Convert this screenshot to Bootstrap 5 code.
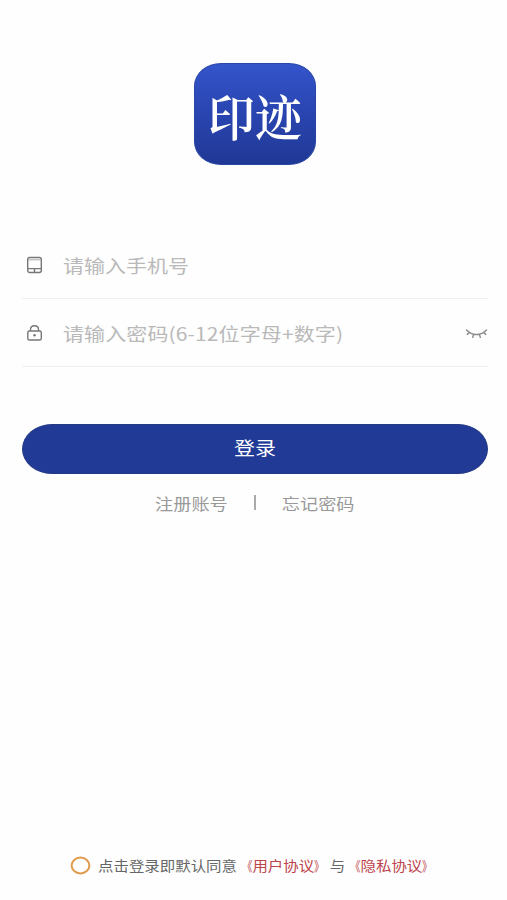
<!DOCTYPE html>
<html lang="zh-CN">
<head>
<meta charset="utf-8">
<meta name="viewport" content="width=device-width, initial-scale=1">
<title>印迹 登录</title>
<link href="https://cdn.jsdelivr.net/npm/bootstrap@5.3.0/dist/css/bootstrap.min.css" rel="stylesheet">
<style>
body{font-family:"Noto Sans CJK SC",sans-serif;background:#fefefe;line-height:1}
.login-page{height:900px;padding:63px 19px 23px 22px;overflow:hidden}
.wide{display:inline-block;transform:scaleY(.86);white-space:nowrap;line-height:24px}
.app-logo{width:122px;height:102px;margin-left:172px;border-radius:27px/23px;background:linear-gradient(#3454cb,#2a46b2 45%,#203895);border:1px solid #2a46a6;color:#fff}
.app-logo .wide{font-family:"Noto Serif CJK SC","Noto Sans CJK SC",serif;font-size:47px;font-weight:600;line-height:60px;transform:translateY(1px) scaleY(1.05)}
.field-row{height:68px;border-bottom:1px solid #efefef;width:466px}
.field-row .wide{font-size:21px;color:#b9b9b9}
.field-row .hint-long{letter-spacing:.12px}
.fields{margin-top:66px}
.field-icon{width:17px;height:18px;margin:1px 20px 0 4px}
.btn-login{width:466px;height:50px;margin-top:57px;border-radius:30px/25px;background:#203a96!important;border:1px solid #263a84!important;color:#fff!important}
.btn-login .wide{font-size:21px;margin-bottom:4px}
.link-row{margin-top:17px;height:24px;margin-left:133px}
.link-row a{font-size:18.2px;color:#999}
.divider{width:2px;height:15px;background:#aaa;margin:0 26px 2px 26px}
.agree{margin-left:48px;color:#666;font-size:15.45px}
.agree a{color:#bd454d}
.ring{margin-right:7px}
.quote-open,.quote-close{display:inline-block;transform:scaleX(.66)}
.quote-open{transform-origin:right}
.quote-close{transform-origin:left}
</style>
</head>
<body>
<main class="login-page d-flex flex-column align-items-start">
  <div class="app-logo d-flex align-items-center justify-content-center"><span class="wide">印迹</span></div>
  <form class="fields">
    <div class="field-row d-flex align-items-center">
      <svg class="field-icon" viewBox="0 0 17 18" fill="none" stroke="#777" stroke-width="1.4"><rect x="1.7" y="1.5" width="13.6" height="15" rx="2"/><path d="M2 3.8h13" stroke="#aaa" stroke-width="1"/><path d="M2 12.6h13M8.5 13v3.3"/></svg>
      <span class="wide">请输入手机号</span>
    </div>
    <div class="field-row d-flex align-items-center">
      <svg class="field-icon" viewBox="0 0 17 18" fill="none" stroke="#777" stroke-width="1.4"><rect x="1.8" y="7" width="13.5" height="9" rx="1.6"/><path d="M4.5 7V5.5C4.5 3 6 1.7 8.5 1.7s4 1.3 4 3.8V7"/><circle cx="8.5" cy="11.3" r="1.2" fill="#777" stroke="none"/></svg>
      <span class="wide hint-long">请输入密码(6-12位字母+数字)</span>
      <svg class="ms-auto mt-1" width="23" height="12" viewBox="0 0 23 12" fill="none" stroke="#8d8d8d" stroke-width="1.4" stroke-linecap="round"><path d="M1.5 1C7 7 16 7 21.5 1M4.3 3.6L2.2 5.4M8.6 5.5L7.6 8.4M14.4 5.5l1 2.9M18.7 3.6l2.1 1.8"/></svg>
    </div>
  </form>
  <button type="button" class="btn btn-login p-0 d-flex align-items-center justify-content-center"><span class="wide">登录</span></button>
  <nav class="link-row d-flex align-items-center">
    <a href="#" class="wide text-decoration-none">注册账号</a>
    <span class="divider"></span>
    <a href="#" class="wide text-decoration-none">忘记密码</a>
  </nav>
  <footer class="agree d-flex align-items-center mt-auto">
    <svg class="ring" width="21" height="19" viewBox="0 0 21 19" fill="none"><ellipse cx="10.5" cy="9.5" rx="8.9" ry="7.9" stroke="#e09a4c" stroke-width="2"/></svg>
    <span class="wide">点击登录即默认同意<a href="#" class="text-decoration-none"><span class="quote-open">《</span>用户协议<span class="quote-close">》</span></a>与<a href="#" class="text-decoration-none"><span class="quote-open">《</span>隐私协议<span class="quote-close">》</span></a></span>
  </footer>
</main>
<script src="https://cdn.jsdelivr.net/npm/bootstrap@5.3.0/dist/js/bootstrap.bundle.min.js"></script>
</body>
</html>
